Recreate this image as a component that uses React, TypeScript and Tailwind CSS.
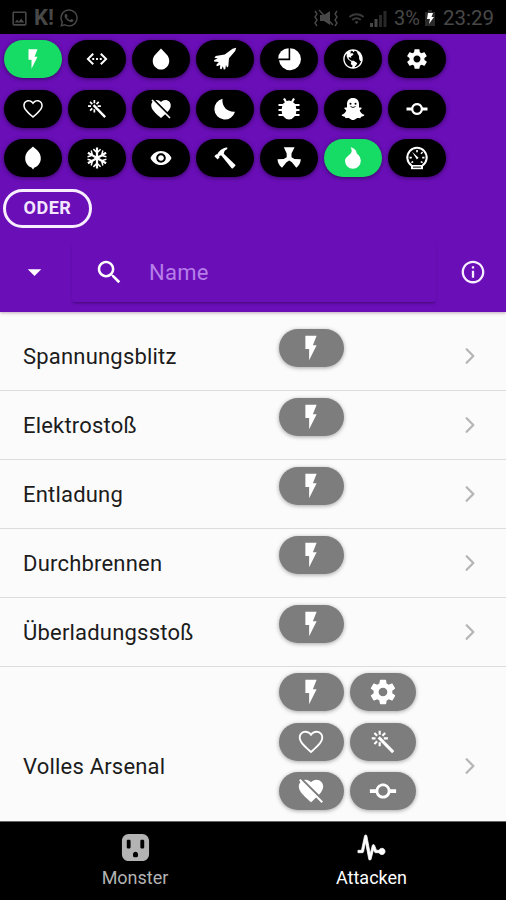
import type { ComponentType, ReactNode } from "react";
import {
  IoMdFlash, IoMdCodeWorking, IoMdWater, IoMdSettings,
  IoMdHeartEmpty, IoMdColorWand, IoMdHeartDislike,
  IoMdGitCommit, IoMdSnow, IoMdEye, IoMdHammer,
  IoMdOutlet, IoMdPulse, IoMdArrowDropdown, IoMdSearch,
  IoMdInformationCircleOutline, IoIosArrowForward, IoMdGlobe,
} from "react-icons/io";
import { MdOutlineImage, MdWifi } from "react-icons/md";
import { FaWhatsapp } from "react-icons/fa";

type Icon = ComponentType<{ size?: number; className?: string }>;

const glyph = (content: ReactNode): Icon =>
  function Glyph({ size = 24, className }) {
    return (
      <svg width={size} height={size} viewBox="0 0 24 24" fill="currentColor" className={className}>
        {content}
      </svg>
    );
  };

const Jet = glyph(
  <path d="M23.200.8l-1 3.200-6.200 7.200-.7 8.300-1.300.9-1-2.400-.7 4.300-1.500.3-1-3.300-1.300 3-1.500-.6.2-3.700-3.200 1.200-.8-1.300 2.600-3-4.800-.3.200-1.600 3.600-1.500-3.300-.8 1.200-1.600 9-1.700 7.900-5.700z" />
);
const Pie = glyph(
  <>
    <path d="M11.600 1.200v10.400H1.200A10.400 10.400 0 0 1 11.600 1.200z" />
    <path d="M13.200 1.200A11 11 0 1 1 2 13.200h11.200z" />
  </>
);
const Moon = glyph(<path d="M9.500 1.800A10.500 10.500 0 1 0 22 14.800C15 15.500 8.500 10 9.500 1.800z" />);
const Bug = glyph(
  <>
    <ellipse cx="12" cy="13" rx="7.500" ry="9.500" />
    <path d="M7 1.500L9 5M17 1.500L15 5M1.500 8h5M1.500 13h5M1.500 18h5M17.500 8h5M17.500 13h5M17.500 18h5" stroke="currentColor" strokeWidth="2.200" />
  </>
);
const Ghost = glyph(
  <>
    <path d="M12 1c3.800 0 6 2.600 6 6v3.400c.6.5 2-.5 2.600.5.500 1-1.700 1.800-1.900 2.500.8 2.400 2.600 3.700 4.600 4.300.5.900-1.600 1.700-3.200 2-.5.600-.2 1.400-1 1.500-1.500 0-2.400-.5-3.700.4-1 .8-2 1.500-3.400 1.500s-2.400-.7-3.400-1.500c-1.300-.9-2.200-.4-3.700-.4-.8-.1-.5-.9-1-1.500-1.600-.3-3.700-1.100-3.200-2 2-.6 3.800-1.900 4.600-4.300-.2-.7-2.400-1.500-1.900-2.500.6-1 2 0 2.600-.5V7c0-3.400 2.200-6 6-6z" />
    <g className="text-black">
      <circle cx="9.500" cy="6.700" r="1" />
      <circle cx="14.500" cy="6.700" r="1" />
      <path d="M9.500 9.500q2.500 2 5 0" fill="none" stroke="currentColor" strokeWidth=".9" />
    </g>
  </>
);
const Leaf = glyph(<path d="M12 .5c1.500 2 7.800 4.700 7.800 11.800 0 4.500-2.600 8-6.300 9.200L12 23.600l-1.500-2.100c-3.700-1.200-6.300-4.700-6.300-9.200C4.200 5.200 10.500 2.500 12 .5z" />);
const Nuclear = glyph(
  <path d="M6.800 1.200h10.800l-3.100 6.400v3.600l3 1.800 6.300.2c-.1 3.600-1.800 6.500-4.500 8.500l-4.400-5.500-2.700-1.700-2.700 1.700L5 21.700C2.300 19.700.6 16.800.5 13.200l6.200-.2 3-1.800V7.600z" />
);
const Flame = glyph(
  <path d="M9.600 1.200c4.800 1 6 4.300 6.200 6.300 2.500 2 4 4.300 4 7.300a7.900 7.900 0 0 1-15.800 0c0-3.700 4.300-5.400 5.900-7.600 1.100-1.600 1-3.800-.3-6z" />
);
const Speedometer = glyph(
  <>
    <path d="M6.500 19.500a9.700 9.700 0 1 1 11 0" fill="none" stroke="currentColor" strokeWidth="2" />
    <path d="M7 5.800l6.600 6-1.700 1.800zM11.200 4h1.600v2.200h-1.600zM4.500 10.800h2.300v1.600H4.500zM17.200 10.800h2.300v1.600h-2.300zM15.500 7.200l1.600-1.600 1 1-1.600 1.600zM6 16l1.800-1 .8 1.300-1.800 1zM18 16l-1.800-1-.8 1.300 1.800 1z" />
    <path d="M6 19h12v4.200H6z" />
    <path d="M8 20.600h8v1H8z" className="text-black" />
  </>
);

const filters: { icon: Icon; on?: boolean }[] = [
  { icon: IoMdFlash, on: true }, { icon: IoMdCodeWorking }, { icon: IoMdWater }, { icon: Jet },
  { icon: Pie }, { icon: IoMdGlobe }, { icon: IoMdSettings },
  { icon: IoMdHeartEmpty }, { icon: IoMdColorWand }, { icon: IoMdHeartDislike }, { icon: Moon },
  { icon: Bug }, { icon: Ghost }, { icon: IoMdGitCommit },
  { icon: Leaf }, { icon: IoMdSnow }, { icon: IoMdEye }, { icon: IoMdHammer },
  { icon: Nuclear }, { icon: Flame, on: true }, { icon: Speedometer },
];

const attacks: { name: string; types: Icon[] }[] = [
  { name: "Spannungsblitz", types: [IoMdFlash] },
  { name: "Elektrostoß", types: [IoMdFlash] },
  { name: "Entladung", types: [IoMdFlash] },
  { name: "Durchbrennen", types: [IoMdFlash] },
  { name: "Überladungsstoß", types: [IoMdFlash] },
  { name: "Volles Arsenal", types: [IoMdFlash, IoMdSettings, IoMdHeartEmpty, IoMdColorWand, IoMdHeartDislike, IoMdGitCommit] },
];

function StatusBar() {
  return (
    <div className="flex h-[34px] shrink-0 items-center bg-black pl-[10px] pr-[11px] pt-[2px] text-[#484848]">
      <MdOutlineImage size={19} />
      <span className="ml-[5px] w-[21px] text-[22px] font-bold leading-none">K!</span>
      <FaWhatsapp size={20} className="ml-[4px]" />
      <div className="ml-auto flex items-center">
        <svg width="26" height="18" viewBox="0 0 26 18" fill="none" stroke="currentColor" strokeWidth="1.400">
          <path d="M2 2l2 3-2 3 2 3-2 3 2 3M24 2l-2 3 2 3-2 3 2 3-2 3" />
          <path d="M7 6h4l6-4v14l-6-4H7z" fill="currentColor" stroke="none" />
          <path d="M6 1l14 15" />
        </svg>
        <MdWifi size={17} className="ml-[9px] opacity-80" />
        <svg width="17" height="17" viewBox="0 0 17 17" fill="currentColor" className="ml-[5px]">
          <path d="M0 13h3v4H0zM4.500 9h3v8h-3z" />
          <path d="M9 5h3v12H9zM13.500 1h3v16h-3z" opacity=".55" />
        </svg>
        <span className="ml-[7px] text-[20px] leading-none">3%</span>
        <svg width="12" height="18" viewBox="0 0 12 18" className="ml-[4px]">
          <path d="M4 1h4v2h3v14H1V3h3z" fill="#2a2a2a" />
          <path d="M4 4h5L7.500 8H10l-5 7 1-5H3z" fill="#fff" />
        </svg>
        <span className="ml-[7px] w-[52px] text-[20.500px] leading-none">23:29</span>
      </div>
    </div>
  );
}

export default function App() {
  return (
    <div className="flex h-[900px] w-[506px] flex-col overflow-hidden bg-[#fbfbfb] font-['Roboto',sans-serif]">
      <StatusBar />
      <header className="z-10 h-[278px] shrink-0 bg-[#6a0eb8] shadow-[0_1px_3px_rgba(80,20,60,0.35)]">
        <div className="grid w-max grid-cols-[repeat(7,58px)] gap-x-[6.100px] gap-y-[11.500px] pl-[3.500px] pt-[6px]">
          {filters.map(({ icon: Icon, on }, i) => (
            <div key={i} className={`flex h-[38px] items-center justify-center rounded-full text-white shadow-[0_1px_4px_rgba(0,0,0,0.5)] ${on ? "bg-[#16db65]" : "bg-black"}`}>
              <Icon size={24} />
            </div>
          ))}
        </div>
        <div className="ml-[3px] mt-[12px] flex h-[39px] w-[89px] items-center justify-center rounded-full border-[3px] border-[#f7eefe] pb-[2px] text-[18px] font-bold tracking-[0.500px] text-[#f3e6fd]">
          ODER
        </div>
        <div className="flex items-center pt-[14px]">
          <div className="flex w-[68px] justify-center text-white"><IoMdArrowDropdown size={27} /></div>
          <div className="ml-[4px] flex h-[60px] w-[364px] items-center rounded-[3px] pl-[22px] shadow-[0_2px_3px_-1px_rgba(0,0,0,0.4)]">
            <IoMdSearch size={30} className="text-white" />
            <span className="ml-[25px] pt-[1px] text-[22px] tracking-[0.300px] text-[#b57ee8]">Name</span>
          </div>
          <IoMdInformationCircleOutline size={28} className="ml-[23px] text-[#f7eefe]" />
        </div>
      </header>
      <main className="min-h-0 flex-1 overflow-hidden pt-[10.500px]">
        {attacks.map(({ name, types }) => (
          <div key={name} className={`flex items-center border-b-[1.500px] border-[#dcdcdc] ${types.length > 1 ? "h-[200px]" : "h-[68.900px]"}`}>
            <div className="w-[278.500px] pl-[23px] pt-px text-[22px] tracking-[0.200px] text-[#1c1c1c]">{name}</div>
            <div className="grid grid-cols-[65.500px_65.500px] gap-x-[6px] gap-y-[11.500px] self-start pt-[6.500px]">
              {types.map((Icon, i) => (
                <div key={i} className="flex h-[38px] items-center justify-center rounded-full bg-[#7d7d7d] text-white shadow-[0_1px_4px_rgba(0,0,0,0.35)]">
                  <Icon size={30} />
                </div>
              ))}
            </div>
            <IoIosArrowForward size={24} className="ml-auto mr-[24px] text-[#b5b5b5]" />
          </div>
        ))}
      </main>
      <nav className="flex h-[79.500px] shrink-0 border-t border-[#666] bg-black text-[18px]">
        <div className="flex w-[270px] flex-col items-center pt-[10.500px] text-[#b3b3b3]">
          <IoMdOutlet size={31} />
          <span className="leading-[30px]">Monster</span>
        </div>
        <div className="flex w-[203px] flex-col items-center pt-[10px] text-white">
          <IoMdPulse size={31} className="stroke-current stroke-[12px]" />
          <span className="leading-[30px]">Attacken</span>
        </div>
      </nav>
    </div>
  );
}
